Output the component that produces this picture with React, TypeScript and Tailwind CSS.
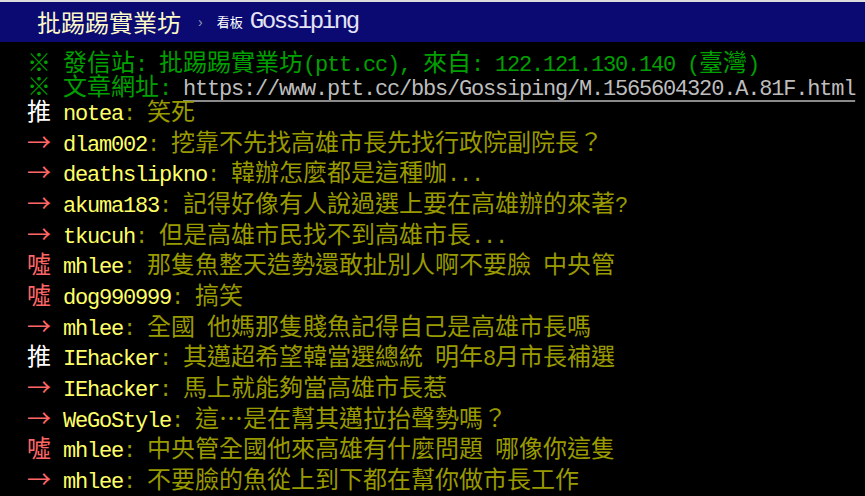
const LATIN = "font-['Liberation_Mono',monospace] text-[22px] tracking-[-1.2px]";
const CJK = "font-['Noto_Sans_CJK_TC','Noto_Sans_CJK_SC',sans-serif] text-[24px]";

// split a line into ascii / wide runs so that every ascii char takes one 12px cell
function Txt({ s }: { s: string }) {
  const parts = s.split(/([\x00-\x7f]+)/).filter(Boolean);
  return (
    <>
      {parts.map((p, i) => (
        <span key={i} className={/^[\x00-\x7f]+$/.test(p) ? LATIN : CJK}>
          {p}
        </span>
      ))}
    </>
  );
}

type Push = { tag: "推" | "→" | "噓"; user: string; content: string };

const pushes: Push[] = [
  { tag: "推", user: "notea", content: "笑死" },
  { tag: "→", user: "dlam002", content: "挖靠不先找高雄市長先找行政院副院長？" },
  { tag: "→", user: "deathslipkno", content: "韓辦怎麼都是這種咖..." },
  { tag: "→", user: "akuma183", content: "記得好像有人說過選上要在高雄辦的來著?" },
  { tag: "→", user: "tkucuh", content: "但是高雄市民找不到高雄市長..." },
  { tag: "噓", user: "mhlee", content: "那隻魚整天造勢還敢扯別人啊不要臉 中央管" },
  { tag: "噓", user: "dog990999", content: "搞笑" },
  { tag: "→", user: "mhlee", content: "全國 他媽那隻賤魚記得自己是高雄市長嗎" },
  { tag: "推", user: "IEhacker", content: "其邁超希望韓當選總統 明年8月市長補選" },
  { tag: "→", user: "IEhacker", content: "馬上就能夠當高雄市長惹" },
  { tag: "→", user: "WeGoStyle", content: "這…是在幫其邁拉抬聲勢嗎？" },
  { tag: "噓", user: "mhlee", content: "中央管全國他來高雄有什麼問題 哪像你這隻" },
  { tag: "→", user: "mhlee", content: "不要臉的魚從上到下都在幫你做市長工作" },
];

export default function App() {
  return (
    <div className="w-[865px] h-[496px] overflow-hidden bg-black">
      <div className="h-[2px] bg-[#dcdcdc]" />
      <div className="h-[40px] bg-[#0a0a72] flex items-center pl-[37px] whitespace-pre">
        <span className="font-['Noto_Sans_CJK_TC',sans-serif] text-[24px] text-[#fcf8c8]">批踢踢實業坊</span>
        <span className="ml-[17px] font-['Liberation_Sans',sans-serif] text-[14px] text-[#9a9ab8]">›</span>
        <span className="ml-[14px] font-['Noto_Sans_CJK_TC',sans-serif] text-[13px] text-white">看板</span>
        <span className="ml-[7px] font-['Liberation_Mono',monospace] text-[24px] tracking-[-2.4px] text-[#e4e4f4]">
          Gossiping
        </span>
      </div>

      <div className={`pt-[7px] pl-[27px] whitespace-pre ${CJK}`}>
        <div className="h-[24px] leading-[24px] text-[#00a000]">
          <Txt s="※ 發信站: 批踢踢實業坊(ptt.cc), 來自: 122.121.130.140 (臺灣)" />
        </div>
        <div className="h-[24px] leading-[24px] text-[#00a000]">
          <Txt s="※ 文章網址: " />
          <span className={`${LATIN} text-[#bdbdbd] underline decoration-[#8a8a8a] underline-offset-[5px]`}>
            https://www.ptt.cc/bbs/Gossiping/M.1565604320.A.81F.html
          </span>
        </div>

        <div className="-mt-[2px]">
          {pushes.map((p, i) => (
            <div key={i} className="h-[30.67px] leading-[30.67px]">
              <span className={p.tag === "推" ? "text-white" : "text-[#ff6666]"}>
                <Txt s={p.tag} />
              </span>
              <span className="text-[#ffff66]">
                <Txt s={" " + p.user} />
              </span>
              <span className="text-[#999900]">
                <Txt s={": " + p.content} />
              </span>
            </div>
          ))}
        </div>
      </div>
    </div>
  );
}
